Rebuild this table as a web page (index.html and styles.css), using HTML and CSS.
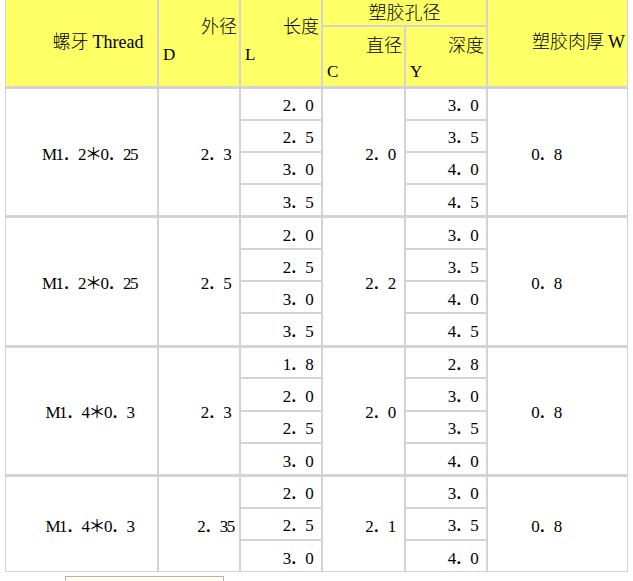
FILE: index.html
```html
<!DOCTYPE html>
<html>
<head>
<meta charset="utf-8">
<link rel="stylesheet" href="styles.css">
</head>
<body>
<table class="spec">
  <colgroup>
    <col class="c1"><col class="c2"><col class="c3"><col class="c4"><col class="c5"><col class="c6">
  </colgroup>
  <thead>
    <tr class="hr1">
      <th rowspan="2" class="hx thread"><span class="cjk">螺牙</span> <span class="en">Thread</span></th>
      <th rowspan="2" class="hx"><div class="t1">外径</div><div class="t2">D</div></th>
      <th rowspan="2" class="hx"><div class="t1">长度</div><div class="t2">L</div></th>
      <th colspan="2" class="hole">塑胶孔径</th>
      <th rowspan="2" class="hx wall"><span class="cjk">塑胶肉厚</span> <span class="en">W</span></th>
    </tr>
    <tr class="hr2">
      <th class="hs"><div class="t1">直径</div><div class="t2">C</div></th>
      <th class="hs"><div class="t1">深度</div><div class="t2">Y</div></th>
    </tr>
  </thead>
  <tbody>
    <tr class="g">
      <td rowspan="4" class="name">M1．2＊0．25</td>
      <td rowspan="4" class="num">2．3</td>
      <td class="num">2．0</td>
      <td rowspan="4" class="num">2．0</td>
      <td class="num">3．0</td>
      <td rowspan="4" class="wallv">0．8</td>
    </tr>
    <tr><td class="num">2．5</td><td class="num">3．5</td></tr>
    <tr><td class="num">3．0</td><td class="num">4．0</td></tr>
    <tr><td class="num">3．5</td><td class="num">4．5</td></tr>

    <tr class="g">
      <td rowspan="4" class="name">M1．2＊0．25</td>
      <td rowspan="4" class="num">2．5</td>
      <td class="num">2．0</td>
      <td rowspan="4" class="num">2．2</td>
      <td class="num">3．0</td>
      <td rowspan="4" class="wallv">0．8</td>
    </tr>
    <tr><td class="num">2．5</td><td class="num">3．5</td></tr>
    <tr><td class="num">3．0</td><td class="num">4．0</td></tr>
    <tr><td class="num">3．5</td><td class="num">4．5</td></tr>

    <tr class="g">
      <td rowspan="4" class="name">M1．4＊0．3</td>
      <td rowspan="4" class="num">2．3</td>
      <td class="num">1．8</td>
      <td rowspan="4" class="num">2．0</td>
      <td class="num">2．8</td>
      <td rowspan="4" class="wallv">0．8</td>
    </tr>
    <tr><td class="num">2．0</td><td class="num">3．0</td></tr>
    <tr><td class="num">2．5</td><td class="num">3．5</td></tr>
    <tr><td class="num">3．0</td><td class="num">4．0</td></tr>

    <tr class="g">
      <td rowspan="3" class="name">M1．4＊0．3</td>
      <td rowspan="3" class="num">2．35</td>
      <td class="num">2．0</td>
      <td rowspan="3" class="num">2．1</td>
      <td class="num">3．0</td>
      <td rowspan="3" class="wallv">0．8</td>
    </tr>
    <tr><td class="num">2．5</td><td class="num">3．5</td></tr>
    <tr><td class="num">3．0</td><td class="num">4．0</td></tr>
  </tbody>
</table>
<div class="note"></div>
</body>
</html>
```
FILE: styles.css
```css
html, body {
  margin: 0;
  padding: 0;
  background: #ffffff;
}

body {
  font-family: "Liberation Serif", "Noto Sans CJK SC", serif;
  color: #000000;
  overflow: hidden;
}

.spec {
  margin: 0 0 0 5px;
  border-collapse: separate;
  border-spacing: 0;
  table-layout: fixed;
  width: 623px;
}

.c1 { width: 153px; }
.c2 { width: 82px; }
.c3 { width: 82px; }
.c4 { width: 83px; }
.c5 { width: 82px; }
.c6 { width: 141px; }

.spec th,
.spec td {
  border: 1px solid #d3d3d3;
  padding: 0;
  box-sizing: border-box;
  white-space: nowrap;
}

.spec th {
  background: #ffff66;
  font-family: "Noto Sans CJK SC", sans-serif;
  font-size: 18px;
  font-weight: 300;
}

.spec .hr1 th {
  border-top-width: 0;
}

.spec .hr1 { height: 26px; }
.spec .hr2 { height: 60px; }

.spec .en {
  font-family: "Liberation Serif", serif;
  font-size: 18px;
  font-weight: normal;
}

.spec .hx {
  vertical-align: middle;
  padding-bottom: 6px;
}

.spec .thread {
  text-align: center;
  padding-left: 33px;
}

.spec .wall {
  text-align: right;
  padding-right: 2px;
}

.spec .hole {
  text-align: center;
  vertical-align: middle;
  padding-bottom: 3px;
  line-height: 22px;
}

.spec .t1 {
  text-align: right;
  padding-right: 2px;
  line-height: 30px;
}

.spec .t2 {
  text-align: left;
  padding-left: 4px;
  line-height: 30px;
  font-family: "Liberation Serif", serif;
  font-size: 17px;
  font-weight: normal;
}

.spec .hs {
  vertical-align: middle;
  padding-top: 3px;
}

.spec .hs .t1,
.spec .hs .t2 {
  line-height: 28px;
}

.spec td {
  height: 32.3px;
  font-size: 17px;
  letter-spacing: -1.5px;
  vertical-align: middle;
  background: #ffffff;
}

.spec tr.g td {
  border-top-width: 2px;
}

.spec tr.g {
  height: 32.5px;
}

.spec .num {
  text-align: center;
  padding-left: 33px;
}

.spec .name {
  text-align: center;
  padding-left: 16px;
}

.spec .wallv {
  text-align: center;
  padding-right: 23px;
}

.note {
  margin: 4px 0 0 65px;
  width: 159px;
  height: 20px;
  box-sizing: border-box;
  border: 1px solid #b4b4b4;
  background: #ffffec;
}
```
